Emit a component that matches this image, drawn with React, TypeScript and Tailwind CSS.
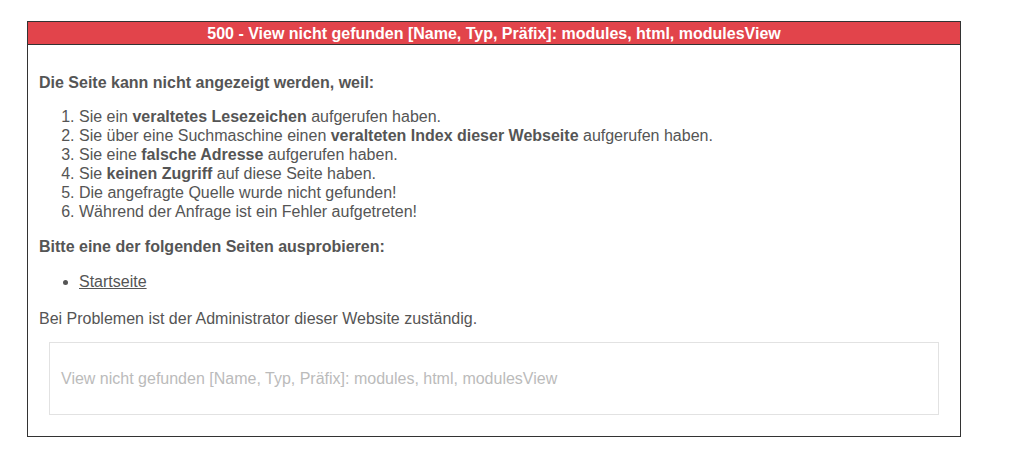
export default function App() {
  return (
    <div className="min-h-[455px] bg-white pl-[27px] pt-[21px] font-['Liberation_Sans',Arial,sans-serif] text-[16px] leading-[19px] text-[#555]">
      <div className="w-[934px] border border-[#333]">
        {/* Header */}
        <div className="flex h-[23px] items-center justify-center border-b border-[#333] bg-[#e2444b] text-[16px] font-bold text-white">
          500 - View nicht gefunden [Name, Typ, Präfix]: modules, html, modulesView
        </div>

        <div className="px-[11px] pt-[28px] pb-[21px]">
          <p className="font-bold">Die Seite kann nicht angezeigt werden, weil:</p>

          <ol className="mt-[15px] list-decimal pl-10">
            <li>
              Sie ein <strong>veraltetes Lesezeichen</strong> aufgerufen haben.
            </li>
            <li>
              Sie über eine Suchmaschine einen <strong>veralteten Index dieser Webseite</strong> aufgerufen haben.
            </li>
            <li>
              Sie eine <strong>falsche Adresse</strong> aufgerufen haben.
            </li>
            <li>
              Sie <strong>keinen Zugriff</strong> auf diese Seite haben.
            </li>
            <li>Die angefragte Quelle wurde nicht gefunden!</li>
            <li>Während der Anfrage ist ein Fehler aufgetreten!</li>
          </ol>

          <p className="mt-[16px] font-bold">Bitte eine der folgenden Seiten ausprobieren:</p>

          <ul className="mt-[16px] list-disc pl-10">
            <li>
              <a href="#" className="underline">
                Startseite
              </a>
            </li>
          </ul>

          <p className="mt-[18px]">Bei Problemen ist der Administrator dieser Website zuständig.</p>

          <div className="mx-[10px] mt-[14px] flex h-[73px] items-center border border-[#e2e2e2] px-[11px] text-[#bbb]">
            View nicht gefunden [Name, Typ, Präfix]: modules, html, modulesView
          </div>
        </div>
      </div>
    </div>
  )
}
